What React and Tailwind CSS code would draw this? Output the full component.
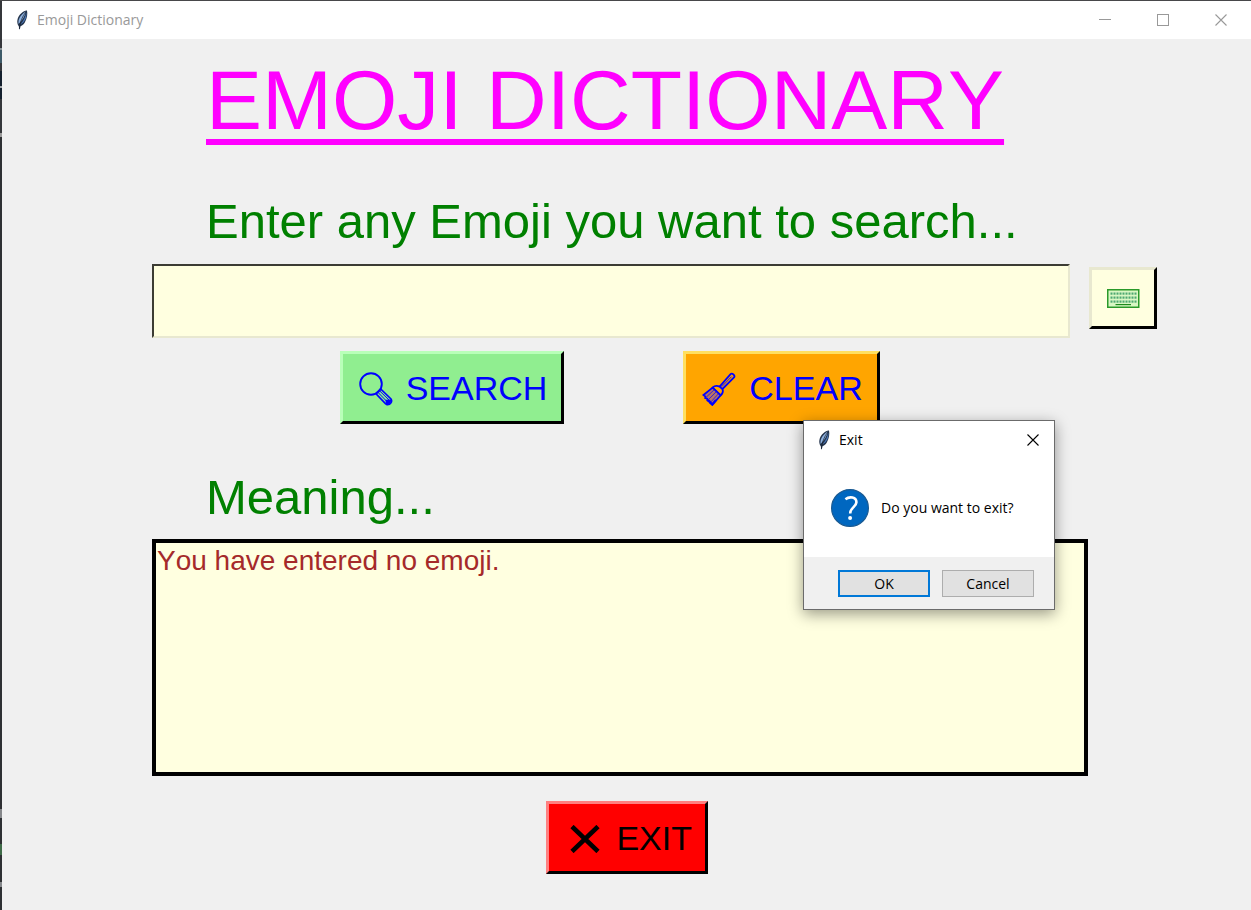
import React from "react";

function Feather() {
  return (
    <svg viewBox="0 0 12 20" className="h-5 w-3 shrink-0" aria-hidden="true">
      <path d="M3.2 19.2 L2.8 16.2 C0.2 13 0.8 7 5.6 3 C7.4 1.4 9.4 0.4 11 0.6 C11.7 4 11.2 8.6 8.8 12.4 C7.6 14.4 5.8 15.8 4.4 16.2 L3.9 19.2 Z" fill="#24344c" />
      <path d="M2.6 14 C1.8 9.6 4.4 5 9.8 1.6 C9 5.8 6.4 10.6 2.6 14 Z" fill="#8fb2e0" />
      <path d="M4.4 14.2 C7.6 11 9.6 6.8 10.3 2.4 C11 7.4 8.8 12.4 4.4 14.2 Z" fill="#4a78b8" />
      <path d="M3.4 18.8 C3.8 12.5 6.2 6.6 9.8 2" fill="none" stroke="#16202e" strokeWidth="0.7" />
    </svg>
  );
}

function CloseGlyph({ className }) {
  return (
    <svg viewBox="0 0 12 12" className={className} aria-hidden="true">
      <path d="M0.5 0.5 L11.5 11.5 M11.5 0.5 L0.5 11.5" stroke="currentColor" strokeWidth="1.1" fill="none" />
    </svg>
  );
}

function KeyboardIcon() {
  const cols = [0, 1, 2, 3, 4, 5, 6, 7, 8];
  return (
    <svg viewBox="0 0 33 19" className="h-[19px] w-[33px]" aria-hidden="true">
      <rect x="0.75" y="0.75" width="31" height="17.5" fill="#d9f7c4" stroke="#2a9a2a" strokeWidth="1.5" />
      {[4, 8, 12].map((y) =>
        cols.map((c) => <rect key={`${y}-${c}`} x={3.5 + c * 3} y={y - 0.5} width="2" height="2.2" fill="#4fa872" />)
      )}
      <path d="M8.5 15.6 H24" stroke="#1d8a1d" strokeWidth="1.2" />
    </svg>
  );
}

function SearchIcon() {
  return (
    <svg viewBox="0 0 34 34" className="h-[34px] w-[34px]" fill="none" stroke="currentColor" aria-hidden="true">
      <circle cx="12" cy="12" r="10.8" strokeWidth="1.9" />
      <path d="M16.8 21.6 L21.6 17 L32 27 C33.6 29.4 31.6 33 28 32.6 L26.4 31.6 Z" strokeWidth="1.7" />
      <path d="M19 20.4 L28.4 30 M20.6 18.8 L30 28" strokeWidth="1" />
      <path d="M27.4 28.6 L31.4 28.4 L30.6 31 L27.6 31.4 Z" fill="currentColor" strokeWidth="1.6" />
    </svg>
  );
}

function BrushIcon() {
  return (
    <svg viewBox="0 0 34 34" className="h-[34px] w-[34px]" fill="none" stroke="currentColor" aria-hidden="true">
      <path d="M17.6 14.6 L28.6 2.2 C30 0.6 33.6 3.4 32 5.4 L20.4 17" strokeWidth="1.8" />
      <path d="M19.6 14.8 L29.6 4.6" strokeWidth="0.9" />
      <path d="M17.6 14.6 C15.4 13.6 12.6 13.6 10.6 15.6 L18.6 23.4 C20.6 21.6 21.4 19.2 20.4 17 Z" strokeWidth="1.8" />
      <path d="M10.6 15.6 L1.4 23 L3.4 24.6 L3.2 26 L5.2 26.6 L5.6 28.4 L7.4 28.8 L8.2 31 L10.4 32.8 L18.6 23.4 Z" fill="#b5706a" strokeWidth="1.8" />
      <path d="M12.4 17.6 L4.4 25 M14.4 19.6 L6.6 27.4 M16.6 21.6 L8.8 30" strokeWidth="0.7" />
      <path d="M5 27.4 L10.2 32.4 L14 28" strokeWidth="2.2" />
    </svg>
  );
}

function CrossIcon() {
  return (
    <svg viewBox="0 0 30 28" className="h-7 w-[30px]" aria-hidden="true">
      <path d="M2 1.5 L28 26.5 M28 1.5 L2 26.5" stroke="currentColor" strokeWidth="4.6" fill="none" />
    </svg>
  );
}

function TitleBar() {
  return (
    <header className="flex h-[38px] items-center bg-white pl-[14px] font-['Open_Sans',sans-serif] text-[#999999]">
      <Feather />
      <span className="ml-[9px] flex-1 text-sm">Emoji Dictionary</span>
      <div className="flex pr-px">
        <button type="button" aria-label="Minimize" className="flex h-9 w-[58px] items-center justify-center">
          <svg viewBox="0 0 12 12" className="h-3 w-3" aria-hidden="true">
            <path d="M0 5.5 H12" stroke="currentColor" />
          </svg>
        </button>
        <button type="button" aria-label="Maximize" className="flex h-9 w-[58px] items-center justify-center">
          <svg viewBox="0 0 12 12" className="h-3 w-3" aria-hidden="true">
            <rect x="0.5" y="0.5" width="11" height="11" fill="none" stroke="currentColor" />
          </svg>
        </button>
        <button type="button" aria-label="Close" className="flex h-9 w-[58px] items-center justify-center">
          <CloseGlyph className="h-3 w-3" />
        </button>
      </div>
    </header>
  );
}

function ExitDialog() {
  return (
    <section
      role="dialog"
      aria-label="Exit"
      className="absolute top-[419px] left-[803px] w-[252px] border border-[#6b6b6b] bg-white font-['Open_Sans',sans-serif] text-sm text-black shadow-[0_4px_14px_rgba(0,0,0,0.4)]"
    >
      <div className="flex h-[38px] items-center pr-[15px] pl-[14px]">
        <Feather />
        <span className="ml-[9px] flex-1">Exit</span>
        <button type="button" aria-label="Close dialog">
          <CloseGlyph className="h-3 w-3" />
        </button>
      </div>
      <div className="flex h-[98px] items-center pl-[27px]">
        <svg viewBox="0 0 38 38" className="h-[38px] w-[38px]" aria-hidden="true">
          <circle cx="19" cy="19" r="18.4" fill="#0067c0" stroke="#1a5a92" strokeWidth="1.2" />
          <path d="M14.4 10.2 C18.4 7.2 25.6 7.8 25.4 13.4 C25.2 18 19.2 18.6 19.2 24.4" fill="none" stroke="#fff" strokeWidth="2.6" />
          <circle cx="19.1" cy="29" r="2" fill="#fff" />
        </svg>
        <p className="ml-3">Do you want to exit?</p>
      </div>
      <div className="flex justify-end gap-3 bg-[#f0f0f0] pt-[13px] pr-5 pb-3">
        <button type="button" className="flex h-[27px] w-[92px] items-center justify-center border-2 border-[#0078d7] bg-[#e1e1e1]">
          OK
        </button>
        <button type="button" className="flex h-[27px] w-[92px] items-center justify-center border border-[#adadad] bg-[#e1e1e1]">
          Cancel
        </button>
      </div>
    </section>
  );
}

export default function App() {
  return (
    <div className="relative flex min-h-screen border-t border-[#48484a] bg-[#f0f0f0] font-['Liberation_Sans',Arial,sans-serif] [font-kerning:none]">
      <div className="w-[2px] shrink-0 bg-[linear-gradient(#35373b_0_47px,#8a9296_47px_49px,#3d5a68_49px_62px,#35373b_62px_70px,#14202e_70px_85px,#a0a4a8_85px_87px,#14202e_87px_98px,#35373b_98px_132px,#9a9a9a_132px_136px,#2e3033_136px_808px,#85878a_808px_817px,#2e3033_817px_843px,#3f6b48_843px_854px,#2e3033_854px_881px,#85878a_881px_886px,#2e3033_886px)]" />
      <div className="min-w-0 flex-1">
        <TitleBar />
        <main className="pt-[13px] pb-9">
          <h1 className="pl-[204px] text-[84px] leading-[96px] whitespace-nowrap text-[#ff00ff] underline decoration-[6px] underline-offset-[10px] [text-decoration-skip-ink:none]">
            EMOJI DICTIONARY
          </h1>
          <label htmlFor="emoji" className="mt-[45px] block pl-[204px] text-[49px] leading-[56px] whitespace-nowrap text-[#008000]">
            Enter any Emoji you want to search...
          </label>
          <div className="mt-[15px] flex items-start gap-[19px] pr-[94px] pl-[150px]">
            <input
              id="emoji"
              type="text"
              className="h-[74px] min-w-0 flex-1 border-2 border-t-[#3c3c34] border-r-[#e8e8d0] border-b-[#e8e8d0] border-l-[#3c3c34] bg-[#ffffe0] px-1 text-[28px] outline-none"
            />
            <button
              type="button"
              aria-label="Open emoji keyboard"
              className="mt-[3px] flex h-[62px] w-[68px] items-center justify-center border-3 border-t-[#e8e8d0] border-r-black border-b-black border-l-[#e8e8d0] bg-[#ffffe0]"
            >
              <KeyboardIcon />
            </button>
          </div>
          <div className="mt-[13px] flex gap-[119px] pl-[338px] text-[34px] text-[#0000ff]">
            <button
              type="button"
              className="flex h-[73px] w-[224px] items-center justify-center gap-[13px] border-3 border-t-[#b9ffb9] border-r-black border-b-black border-l-[#b9ffb9] bg-[#90ee90] pt-[2px] pl-[2px]"
            >
              <SearchIcon />
              SEARCH
            </button>
            <button
              type="button"
              className="flex h-[73px] w-[197px] items-center justify-center gap-[13px] border-3 border-t-[#ffdf60] border-r-black border-b-black border-l-[#ffdf60] bg-[#ffa500] pt-[2px] pl-[2px]"
            >
              <BrushIcon />
              CLEAR
            </button>
          </div>
          <label htmlFor="meaning" className="mt-[45px] block pl-[204px] text-[49px] leading-[56px] text-[#008000]">
            Meaning...
          </label>
          <div className="mt-[14px] pr-[163px] pl-[150px]">
            <textarea
              id="meaning"
              readOnly
              defaultValue="You have entered no emoji."
              className="block h-[237px] w-full resize-none border-4 border-black bg-[#ffffe0] px-px text-[28px] leading-9 text-[#a52a2a] outline-none"
            />
          </div>
          <div className="mt-[25px] pl-[544px]">
            <button
              type="button"
              className="flex h-[73px] w-[162px] items-center justify-end gap-4 border-3 border-t-[#ff8080] border-r-black border-b-black border-l-[#ff8080] bg-[#ff0000] pt-[2px] pr-[13px] text-[34px] text-black"
            >
              <CrossIcon />
              EXIT
            </button>
          </div>
        </main>
      </div>
      <ExitDialog />
    </div>
  );
}
